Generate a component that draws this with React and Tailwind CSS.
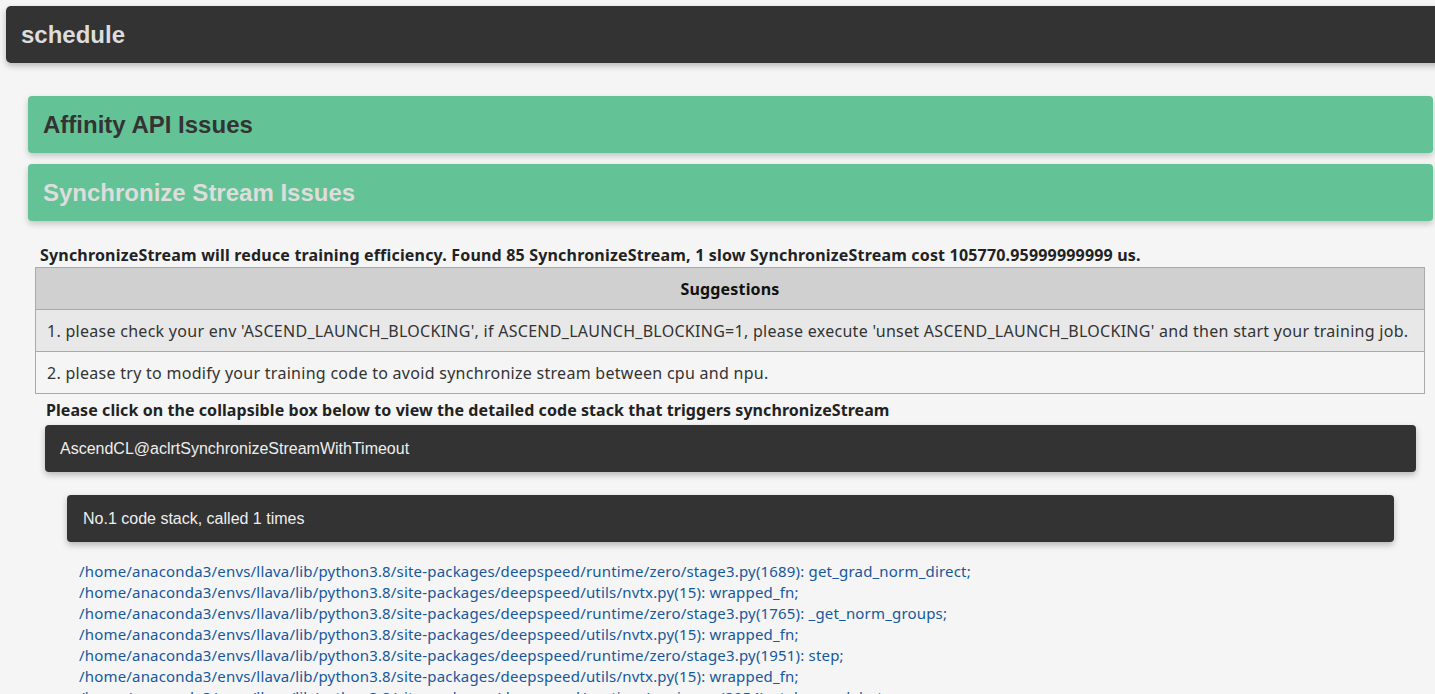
import React from "react";

const codeStack = [
  "/home/anaconda3/envs/llava/lib/python3.8/site-packages/deepspeed/runtime/zero/stage3.py(1689): get_grad_norm_direct;",
  "/home/anaconda3/envs/llava/lib/python3.8/site-packages/deepspeed/utils/nvtx.py(15): wrapped_fn;",
  "/home/anaconda3/envs/llava/lib/python3.8/site-packages/deepspeed/runtime/zero/stage3.py(1765): _get_norm_groups;",
  "/home/anaconda3/envs/llava/lib/python3.8/site-packages/deepspeed/utils/nvtx.py(15): wrapped_fn;",
  "/home/anaconda3/envs/llava/lib/python3.8/site-packages/deepspeed/runtime/zero/stage3.py(1951): step;",
  "/home/anaconda3/envs/llava/lib/python3.8/site-packages/deepspeed/utils/nvtx.py(15): wrapped_fn;",
  "/home/anaconda3/envs/llava/lib/python3.8/site-packages/deepspeed/runtime/engine.py(2054): _take_model_step;",
  "/home/anaconda3/envs/llava/lib/python3.8/site-packages/deepspeed/runtime/engine.py(2160): step;",
];

const suggestions = [
  "1. please check your env 'ASCEND_LAUNCH_BLOCKING', if ASCEND_LAUNCH_BLOCKING=1, please execute 'unset ASCEND_LAUNCH_BLOCKING' and then start your training job.",
  "2. please try to modify your training code to avoid synchronize stream between cpu and npu.",
];

export default function App() {
  return (
    <div className="min-h-screen bg-[#f5f5f5] overflow-hidden pt-[6px] pb-10">
      {/* page title bar */}
      <div className="ml-[6px] w-[1450px] h-[57px] rounded-[5px] bg-[#333333] shadow-[0_3px_6px_rgba(0,0,0,0.25)] flex items-center px-[15px]">
        <h1 className="text-[24px] font-bold text-[#dddddd] font-['Liberation_Sans',Arial,sans-serif]">schedule</h1>
      </div>

      <div className="ml-[28px] w-[1405px] mt-[33px] flex flex-col gap-[11px]">
        <div className="h-[57px] rounded-[4px] bg-[#64c396] shadow-[0_3px_6px_rgba(0,0,0,0.2)] flex items-center px-[15px]">
          <h2 className="text-[24px] font-bold text-[#333333] font-['Liberation_Sans',Arial,sans-serif]">Affinity API Issues</h2>
        </div>
        <div className="h-[57px] rounded-[4px] bg-[#64c396] shadow-[0_3px_6px_rgba(0,0,0,0.2)] flex items-center px-[15px]">
          <h2 className="text-[24px] font-bold text-[#dddddd] font-['Liberation_Sans',Arial,sans-serif]">Synchronize Stream Issues</h2>
        </div>
      </div>

      <div className="ml-[35px] w-[1390px] mt-[23px] font-['Noto_Sans','Open_Sans',sans-serif] text-[#222222]">
        <p className="pl-[5px] mb-[1px] text-[16px] font-bold leading-[22px] tracking-[0.18px]">
          SynchronizeStream will reduce training efficiency. Found 85 SynchronizeStream, 1 slow SynchronizeStream cost 105770.95999999999 us.
        </p>
        <table className="w-full border-collapse border border-[#aaaaaa] text-[16px] text-[#333333] tracking-[0.28px]">
          <thead>
            <tr className="bg-[#d0d0d0] h-[42px]">
              <th className="font-bold text-[#111111] text-center border border-[#aaaaaa] tracking-[0.18px]">Suggestions</th>
            </tr>
          </thead>
          <tbody>
            {suggestions.map((s, i) => (
              <tr key={i} className={i % 2 === 0 ? "bg-[#e8e8e8] h-[42px]" : "bg-[#f5f5f5] h-[42px]"}>
                <td className="px-[11px] border border-[#aaaaaa]">{s}</td>
              </tr>
            ))}
          </tbody>
        </table>
        <p className="pl-[11px] mt-[5px] text-[16px] font-bold leading-[22px] tracking-[0.07px]">
          Please click on the collapsible box below to view the detailed code stack that triggers synchronizeStream
        </p>
      </div>

      <div className="ml-[45px] w-[1371px] mt-[4px] h-[47px] rounded-[4px] bg-[#333333] shadow-[0_3px_6px_rgba(0,0,0,0.25)] flex items-center px-[15px]">
        <span className="text-[16px] text-[#eeeeee] font-['Liberation_Sans',Arial,sans-serif]">AscendCL@aclrtSynchronizeStreamWithTimeout</span>
      </div>

      <div className="ml-[67px] w-[1327px] mt-[23px] h-[47px] rounded-[4px] bg-[#333333] shadow-[0_3px_6px_rgba(0,0,0,0.25)] flex items-center px-[16px]">
        <span className="text-[16px] text-[#eeeeee] font-['Liberation_Sans',Arial,sans-serif]">No.1 code stack, called 1 times</span>
      </div>

      <div className="ml-[79px] mt-[19px] font-['Noto_Sans','Open_Sans',sans-serif] text-[15px] leading-[21px] tracking-[0.18px] text-[#17589c]">
        {codeStack.map((line, i) => (
          <div key={i}>{line}</div>
        ))}
      </div>
    </div>
  );
}
